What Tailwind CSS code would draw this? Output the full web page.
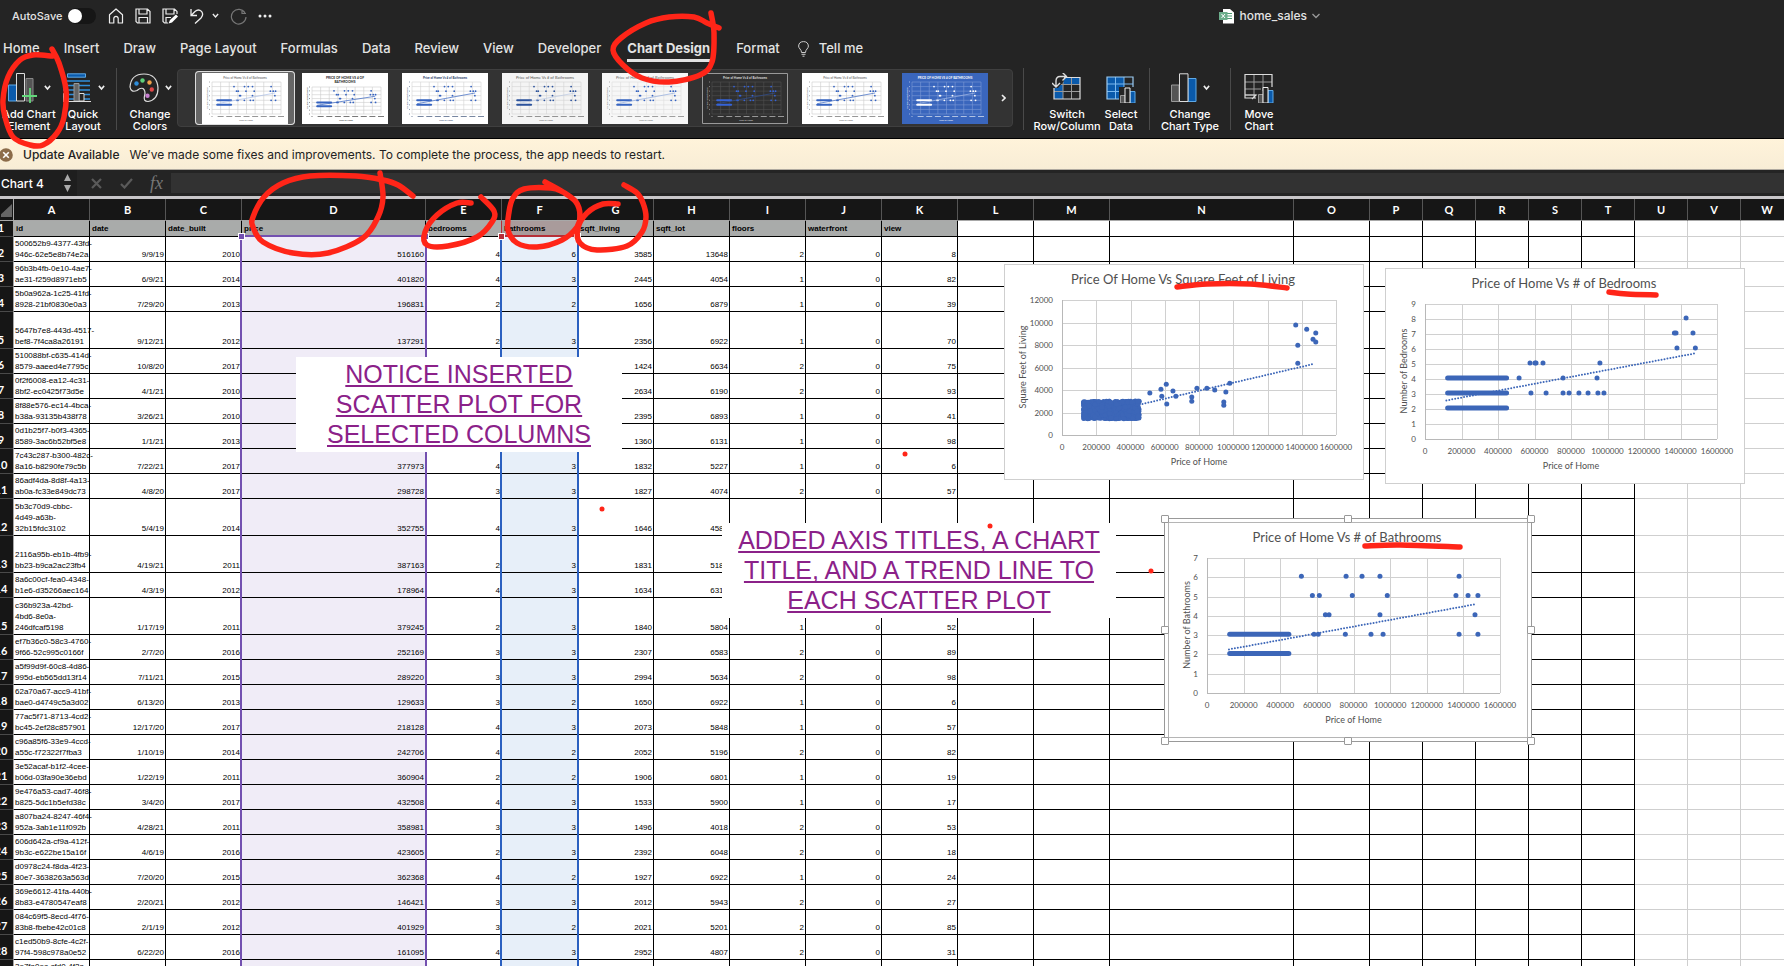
<!DOCTYPE html>
<html lang="en">
<head>
<meta charset="utf-8">
<title>home_sales</title>
<script src="https://cdn.jsdelivr.net/npm/@tailwindcss/browser@4"></script>
</head>
<body class="relative flex h-screen flex-col overflow-hidden bg-[#242424] font-['Inter','Liberation_Sans',sans-serif] text-[#e3e3e3]">

<!-- Title bar -->
<header class="flex h-[30px] shrink-0 items-center pt-0.5 pl-3 text-[11px] font-medium">
  <label class="flex items-center gap-1.5">AutoSave
    <input type="checkbox" role="switch" class="h-4 w-7 appearance-none rounded-full bg-[#161616] before:block before:size-[14px] before:translate-y-px before:rounded-full before:bg-white before:content-['']">
  </label>
  <div class="ml-3 flex items-center gap-[11px]">
    <button aria-label="Home"><svg class="size-4" viewBox="0 0 16 16" fill="none" stroke="#eee" stroke-width="1.2" stroke-linejoin="round"><path d="M1.5 6.8 8 1l6.500 5.800V15H10.200V10.500Q10 8.300 8 8.300T5.800 10.500V15H1.500Z"/></svg></button>
    <button aria-label="Save"><svg class="size-4" viewBox="0 0 16 16" fill="none" stroke="#eee" stroke-width="1.2"><path d="M1 1H12.500L15 3.500V15H2.500L1 13.500ZM4 1V6H12V1M4 15V9.500H12.500V15"/></svg></button>
    <button aria-label="Save as"><svg class="size-4" viewBox="0 0 16 16" fill="none" stroke="#eee" stroke-width="1.2"><path d="M6 15H2.500L1 13.500V1H12.500L15 3.500V6M4 1V6H12V1M4 15V9.500H9"/><path d="M6.500 15.500 8 12 14 6.500 16 8.500 10 14.500Z" fill="#fff" stroke="none"/></svg></button>
    <button aria-label="Undo"><svg class="size-4" viewBox="0 0 16 16" fill="none" stroke="#eee" stroke-width="1.3"><path d="M2 1V7.500H8M2.300 7.300 6 3.500Q9.500 .5 12.500 3.400Q15 6.500 12 10L6 15.500"/></svg></button>
    <button aria-label="Undo list" class="-ml-1"><svg class="w-[7px]" viewBox="0 0 8 6" fill="none" stroke="#eee" stroke-width="1.600"><path d="M1 1.200 4 4.500 7 1.200"/></svg></button>
    <button aria-label="Redo"><svg class="size-[17px]" viewBox="0 0 17 17" fill="none" stroke="#777" stroke-width="1.200"><path d="M12 1.500V5.500H16M15 5A7.300 7.300 0 1 0 16 9"/></svg></button>
    <button aria-label="More"><svg class="h-4 w-[14px]" viewBox="0 0 14 16" fill="#eee"><circle cx="2" cy="8" r="1.500"/><circle cx="7" cy="8" r="1.500"/><circle cx="12" cy="8" r="1.500"/></svg></button>
  </div>
  <button class="mr-[464px] ml-auto flex items-center gap-[5px] text-xs">
    <svg class="h-4 w-[15px]" viewBox="0 0 15 16"><path d="M4 1H11L15 4.500V15.500H4Z" fill="#fff"/><path d="M8 5.500H13M8 8H13M8 10.500H13" stroke="#4b9a72" stroke-width="1.200"/><path d="M0 4H8.500V12H0Z" fill="#6cae8c"/><path d="M2.500 6 6 10M6 6 2.500 10" stroke="#fff"/></svg>
    home_sales
    <svg class="w-2" viewBox="0 0 8 6" fill="none" stroke="#999" stroke-width="1.300"><path d="M.5 1 4 4.500 7.500 1"/></svg>
  </button>
</header>

<!-- Ribbon tabs -->
<nav class="flex h-[38px] shrink-0 items-center gap-6 pl-[3px] text-[13px] font-medium whitespace-nowrap">
  <button>Home</button><button>Insert</button><button>Draw</button><button>Page Layout</button><button>Formulas</button><button>Data</button><button>Review</button><button>View</button><button>Developer</button>
  <button class="relative mx-0.5 font-bold after:absolute after:inset-x-0 after:-bottom-[3px] after:h-[3px] after:bg-[#e3e3e3] after:content-['']">Chart Design</button>
  <button>Format</button>
  <button class="-ml-1.5 flex items-center gap-2.5"><svg class="h-4 w-[11px]" viewBox="0 0 11 16" fill="none" stroke="#ccc"><path d="M3.500 11.500Q3.500 9.500 2 8Q.6 6.500 .6 5Q1 .6 5.500 .6T10.400 5Q10.400 6.500 9 8Q7.500 9.500 7.500 11.500ZM3.500 13.300H7.500M4.500 15.200H6.500"/></svg>Tell me</button>
</nav>

<!-- Ribbon -->
<section aria-label="Chart Design" class="flex h-[70px] shrink-0 items-start text-[11px] leading-3 font-medium text-white [&>button]:flex [&>button]:shrink-0 [&>button]:flex-col [&>button]:items-center [&>button]:gap-[5px] [&>button]:pt-[5px] [&>button>span]:flex [&>button>span]:h-[30px] [&>button>span]:items-center [&>button>span]:gap-[6px] [&>hr]:h-[62px] [&>hr]:w-px [&>hr]:shrink-0 [&>hr]:border-0 [&>hr]:bg-[#4a4a4a]">
  <button class="w-[58px]"><span><svg class="size-[30px]" viewBox="0 0 30 30"><path d="M18 5.500H25V28H18Z" fill="#555" stroke="#888"/><path d="M.5 12H8.500V28H.5Z" fill="#0a5aab" stroke="#5ea9e6"/><path d="M8.500 .5H16.500V28H8.500Z" fill="#242424" stroke="#ddd"/><path d="M22 15V31M14 23H29" stroke="#63d77b" stroke-width="1.800"/></svg><svg class="w-[7px]" viewBox="0 0 8 6" fill="none" stroke="#eee" stroke-width="1.800"><path d="M1 1 4 4.500 7 1"/></svg></span>Add Chart<br>Element</button>
  <button class="w-[50px]"><span><svg class="size-[30px]" viewBox="0 0 30 30"><path d="M1 8H28M1 12.500H28M1 17H28M1 21.500H28M1 26H28" stroke="#2f8edb" stroke-width="1.300"/><path d="M5.500 .8H23.500V4.200H5.500Z" fill="#0a5aab" stroke="#5ea9e6"/><path d="M1.500 20.500H6.500V28H1.500ZM17 20.500H22V28H17Z" fill="#242424" stroke="#ddd"/><path d="M12 10.500H17V28H12Z" fill="#666" stroke="#999"/><path d="M1 28.500H29" stroke="#ddd"/></svg><svg class="w-[7px]" viewBox="0 0 8 6" fill="none" stroke="#eee" stroke-width="1.800"><path d="M1 1 4 4.500 7 1"/></svg></span>Quick<br>Layout</button>
  <hr class="ml-2">
  <button class="ml-1.5 w-[54px]"><span><svg class="size-[30px]" viewBox="0 0 30 30"><path d="M1 14Q2 1 15 1T29 15Q29 27 19 28.500Q14 28.500 15.500 23Q17 18 14 15.500Q11.500 14.500 8 17.500Q2 20 1 14Z" fill="none" stroke="#ddd" stroke-width="1.200"/><circle cx="7.500" cy="10.500" r="2.200" fill="#2f8edb"/><circle cx="13.500" cy="7.500" r="2.200" fill="#5fd07a"/><circle cx="20.500" cy="9.500" r="2.200" fill="#f0a24a"/><circle cx="22.800" cy="16.500" r="2.200" fill="#e04848"/><circle cx="18.500" cy="22.800" r="2.200" fill="#c77fd0"/></svg><svg class="w-[7px]" viewBox="0 0 8 6" fill="none" stroke="#eee" stroke-width="1.800"><path d="M1 1 4 4.500 7 1"/></svg></span>Change<br>Colors</button>
  <div id="gallery" class="mt-px flex h-[58px] shrink-0 items-center rounded border border-[#3f3f3f] bg-[#333] pl-[17px] [&>button]:flex [&>button]:h-[54px] [&>button]:w-[100px] [&>button]:items-center [&>button]:justify-center [&>button]:rounded [&>button[aria-pressed=true]]:bg-[#666] [&>button[aria-pressed=true]]:ring-1 [&>button[aria-pressed=true]]:ring-[#ddd] [&>button[aria-pressed=true]]:ring-inset"></div>
  <hr class="ml-2.5">
  <button class="ml-[9px] w-[68px]"><span><svg class="size-[30px]" viewBox="0 0 30 30"><path d="M2 4.500H28V26H2Z" fill="#242424"/><path d="M11 4.500H28V11.500H11ZM2 11.500H11V26H2Z" fill="#0a5aab"/><path d="M11 4.500V26M19.500 4.500V26M2 11.500H28M2 18.500H28" stroke="#999"/><path d="M2 4.500H28V26H2Z" fill="none" stroke="#ddd" stroke-width="1.200"/><path d="M0 0H12V8L6 15H0Z" fill="#242424"/><path d="M4 14V8Q4 3.500 8 3.500H14M10.500 -.5 14.500 3.500 10.500 7.500M0 10 4 14 8 10" fill="none" stroke="#ddd" stroke-width="1.400"/></svg></span>Switch<br>Row/Column</button>
  <button class="w-10"><span><svg class="size-[30px]" viewBox="0 0 30 30"><path d="M1 4H27V26H1Z" fill="#242424"/><path d="M1 4H18V26H1Z" fill="#0a5aab"/><path d="M9.500 4V26M18 4V26M1 11H27M1 18.500H27" stroke="#7ab8ee"/><path d="M1 4H27V26H1Z" fill="none" stroke="#9ccbf2" stroke-width="1.200"/><path d="M13 14H30V30H13Z" fill="#242424"/><path d="M14.500 22.500H19V30H14.500Z" fill="#555" stroke="#999"/><path d="M24 18.500H29V30H24Z" fill="#0a5aab" stroke="#5ea9e6"/><path d="M19 15H24V30H19Z" fill="#242424" stroke="#eee"/></svg></span>Select<br>Data</button>
  <hr class="ml-2">
  <button class="ml-2.5 w-[60px]"><span><svg class="h-[30px] w-[26px]" viewBox="0 0 26 30"><path d="M.5 12H8V28.500H.5Z" fill="#555" stroke="#999"/><path d="M17 5.500H25V28.500H17Z" fill="#0a5aab" stroke="#5ea9e6"/><path d="M8.500 .8H17V28.500H8.500Z" fill="#242424" stroke="#ddd"/></svg><svg class="w-[7px]" viewBox="0 0 8 6" fill="none" stroke="#eee" stroke-width="1.800"><path d="M1 1 4 4.500 7 1"/></svg></span>Change<br>Chart Type</button>
  <hr class="ml-2.5">
  <button class="ml-[3px] w-[50px]"><span><svg class="size-[30px]" viewBox="0 0 30 30"><path d="M10 2V25M19 2V18M1 9H28M1 16H17M1 22H12" stroke="#999" fill="none"/><path d="M12 25H1V1.500H28V14M1 22H12L8 26" stroke="#ddd" fill="none" stroke-width="1.200"/><path d="M14.500 21.500H19V30H14.500Z" fill="#555" stroke="#999"/><path d="M24 17.500H29V30H24Z" fill="#0a5aab" stroke="#5ea9e6"/><path d="M19 14.500H24V30H19Z" fill="#242424" stroke="#eee"/></svg></span>Move<br>Chart</button>
</section>

<!-- Update message -->
<section role="status" class="flex h-8 shrink-0 items-center gap-2.5 border-t border-b border-t-black border-b-[#b0aaa0] bg-linear-to-b from-[#fff3da] to-[#f8edd6] pt-0.5 text-xs text-[#222]">
  <button aria-label="Dismiss" class="-ml-px"><svg class="size-[14px]" viewBox="0 0 14 14"><circle cx="7" cy="7" r="6.800" fill="#8c6c4a"/><path d="M4.200 4.200 9.800 9.800M9.800 4.200 4.200 9.800" stroke="#fff" stroke-width="1.600"/></svg></button>
  <strong class="font-medium">Update Available</strong>
  <p>We’ve made some fixes and improvements. To complete the process, the app needs to restart.</p>
</section>

<!-- Formula bar -->
<section class="flex h-[26px] shrink-0 items-center">
  <input aria-label="Name box" value="Chart 4" class="h-full w-[60px] bg-[#1e1e1e] pl-px text-[12px] font-medium text-white">
  <button aria-label="Change name box size" class="flex h-full w-[17px] items-center bg-[#1e1e1e] pl-1"><svg class="h-[18px] w-[7px]" viewBox="0 0 7 18" fill="#aaa"><path d="M3.500 0 7 7H0ZM3.500 18 7 11H0Z"/></svg></button>
  <button aria-label="Cancel" class="ml-[14px]"><svg class="size-[11px]" viewBox="0 0 11 11" stroke="#5a5a5a" stroke-width="2.200"><path d="M1 1 10 10M10 1 1 10"/></svg></button>
  <button aria-label="Enter" class="ml-[18px]"><svg class="h-[11px] w-[13px]" viewBox="0 0 13 11" fill="none" stroke="#5a5a5a" stroke-width="2.200"><path d="M1 6 4.500 9.500 12 1"/></svg></button>
  <button aria-label="Insert function" class="ml-4 w-[15px] font-['Liberation_Serif',serif] text-[18px] leading-none text-[#777] italic">fx</button>
  <input aria-label="Formula" class="ml-[7px] h-5 flex-1 bg-[#323232]">
</section>

<!-- Worksheet -->
<main class="relative min-h-0 flex-1 overflow-hidden border-t-[3px] border-[#c8c6c9] bg-white text-black">
  <table class="-ml-[11px] w-[1805px] table-fixed border-separate border-spacing-0 font-['Liberation_Sans',Arial,sans-serif] text-[8px] leading-[11px]
    [&_td]:border-r [&_td]:border-b [&_td]:border-black [&_td]:px-px [&_td]:pb-px [&_td]:text-right [&_td]:align-bottom [&_td]:whitespace-nowrap
    [&_td:nth-child(n+22)]:border-[#cfcfcf]
    [&_td:nth-child(2)]:text-left
    [&_tbody_td:nth-child(5)]:bg-[#f0ecf7] [&_tbody_td:nth-child(7)]:bg-[#e7eff9]
    [&_th[scope=row]]:border-r [&_th[scope=row]]:border-b [&_th[scope=row]]:border-r-[#a8a8a8] [&_th[scope=row]]:border-b-[#4a4a4a] [&_th[scope=row]]:bg-[#161616] [&_th[scope=row]]:p-0 [&_th[scope=row]]:pb-0.5 [&_th[scope=row]]:align-bottom [&_th[scope=row]]:font-['Lato',sans-serif] [&_th[scope=row]]:text-[11px] [&_th[scope=row]]:leading-3 [&_th[scope=row]]:text-white">
    <colgroup id="cols"></colgroup>
    <thead id="head"></thead>
    <tbody id="rows"></tbody>
  </table>

  <!-- Chart source ranges -->
  <div class="absolute top-9 -bottom-1 left-[240px] w-[187px] border-2 border-[#7350b0]"></div>
  <div class="absolute top-[38px] -bottom-1 left-[500px] w-[79px] border-x-2 border-[#2b60c0]"></div>
  <div class="absolute top-[22px] left-[501px] h-4 w-[77px] border-b-2 border-l border-[#b52f38]"></div>
  <i class="absolute top-[34px] left-[238px] size-[7px] border border-white bg-[#7350b0]"></i>
  <i class="absolute top-[34px] left-[422px] size-[7px] border border-white bg-[#7350b0]"></i>
  <i class="absolute top-[34px] left-[498px] size-[7px] border border-white bg-[#b52f38]"></i>
  <i class="absolute top-[34px] left-[574px] size-[7px] border border-white bg-[#b52f38]"></i>

  <!-- Charts -->
  <figure id="chart-sqft" class="absolute top-[65px] left-[1004px] border border-[#cfcfcf] bg-white"></figure>
  <figure id="chart-bed" class="absolute top-[69px] left-[1385px] border border-[#cfcfcf] bg-white"></figure>
  <div class="absolute top-[319px] left-[1164px] border border-[#999] bg-white p-[3px]">
    <figure id="chart-bath" class="border border-[#b5b5b5]"></figure>
    <div class="absolute -inset-1 grid grid-cols-3 content-between [&>i]:size-2 [&>i]:rounded-[1px] [&>i]:border [&>i]:border-[#999] [&>i]:bg-white [&>i:nth-child(3n)]:justify-self-end [&>i:nth-child(3n+2)]:justify-self-center">
      <i></i><i></i><i></i><i></i><b></b><i></i><i></i><i></i><i></i>
    </div>
  </div>

  <!-- Notes -->
  <p class="absolute top-[158px] left-[296px] flex h-[95px] w-[326px] items-center justify-center bg-white pb-0.5 text-center font-['Liberation_Sans',Arial,sans-serif] text-[25px] leading-[30px] text-[#8b2189]"><u class="decoration-2 underline-offset-2 [text-decoration-skip-ink:none]">NOTICE INSERTED<br>SCATTER PLOT FOR<br>SELECTED COLUMNS</u></p>
  <p class="absolute top-[324px] left-[722px] flex h-[95px] w-[394px] items-center justify-center bg-white pb-0.5 text-center font-['Liberation_Sans',Arial,sans-serif] text-[25px] leading-[30px] text-[#8b2189]"><u class="decoration-2 underline-offset-2 [text-decoration-skip-ink:none]">ADDED AXIS TITLES, A CHART<br>TITLE, AND A TREND LINE TO<br>EACH SCATTER PLOT</u></p>
</main>

<!-- Pen marks -->
<svg id="ink" class="pointer-events-none absolute top-0 left-0 h-[966px] w-[1784px]" viewBox="0 0 1784 966" fill="none" stroke="#ff2518" stroke-width="5.500" stroke-linecap="round" stroke-linejoin="round"></svg>

<script>
// Columns and rows
const widths = [25,76,76,76,184,76,76,76,76,76,76,76,76,76,184,76,53,53,53,53,53,53,53,53];
document.getElementById('cols').innerHTML = widths.map(w => `<col style="width:${w}px">`).join('');
const heads = ['id','date','date_built','price','bedrooms','bathrooms','sqft_living','sqft_lot','floors','waterfront','view'];
document.getElementById('head').innerHTML =
  `<tr class="h-[22px] bg-[#161616] font-['Lato',sans-serif] text-[11px] text-white"><th class="border-r border-b border-[#a8a8a8] p-0"><svg class="ml-auto h-[17px] w-3" viewBox="0 0 12 17"><path d="M11 3V16H-3Z" fill="#666"/></svg></th>`
  + [...'ABCDEFGHIJKLMNOPQRSTUVW'].map(c => `<th scope="col" class="border-r border-b border-r-[#555] border-b-[#a8a8a8] p-0">${c}</th>`).join('') + '</tr>'
  + `<tr class="h-4"><th scope="row">1</th>`
  + heads.map(h => `<th class="border-r border-b border-black p-0 pl-0.5 text-left ${h === 'bathrooms' ? 'bg-[#a99b9b]' : 'bg-[#a9abaa]'}">${h}</th>`).join('')
  + '<td></td>'.repeat(12) + '</tr>';
const data = `500652b9-4377-43fd-|946c-62e5e8b74e2a,9/9/19,2010,516160,4,6,3585,13648,2,0,8
96b3b4fb-0e10-4ae7-|ae31-f259d8971eb5,6/9/21,2014,401820,4,3,2445,4054,1,0,82
5b0a962a-1c25-41fd-|8928-21bf0830e0a3,7/29/20,2013,196831,2,2,1656,6879,1,0,39
5647b7e8-443d-4517-|bef8-7f4ca8a26191,9/12/21,2012,137291,2,3,2356,6922,1,0,70
510088bf-c635-414d-|8579-aaeed4e7795c,10/8/20,2017,,,,1424,6634,2,0,75
0f2f6008-ea12-4c31-|8bf2-ec0425f73d5e,4/1/21,2010,,,,2634,6190,2,0,93
8f88e576-ec14-4bca-|b38a-93135b438f78,3/26/21,2010,,,,2395,6893,1,0,41
0d1b25f7-b0f3-4365-|8589-3ac6b52bf5e8,1/1/21,2013,,,,1360,6131,1,0,98
7c43c287-b300-482c-|8a16-b8290fe79c5b,7/22/21,2017,377973,4,3,1832,5227,1,0,6
86adf4da-8d8f-4a13-|ab0a-fc33e849dc73,4/8/20,2017,298728,3,3,1827,4074,2,0,57
5b3c70d9-cbbc-|4d49-a63b-|32b15fdc3102,5/4/19,2014,352755,4,3,1646,4580,,,
2116a95b-eb1b-4fb9-|bb23-b9ca2ac23fb4,4/19/21,2011,387163,2,3,1831,5180,,,
8a6c00cf-fea0-4348-|b1e6-d35266aec164,4/3/19,2012,178964,4,3,1634,6317,,,
c36b923a-42bd-|4bd6-8e0a-|246dfcaf5198,1/17/19,2011,379245,2,3,1840,5804,1,0,52
ef7b36c0-58c3-4760-|9f66-52c995c0166f,2/7/20,2016,252169,3,3,2307,6583,2,0,89
a5f99d9f-60c8-4d86-|995d-eb565dd13f14,7/11/21,2015,289220,3,3,2994,5634,2,0,98
62a70a67-acc9-41bf-|bae0-d4749c5a3d02,6/13/20,2013,129633,3,2,1650,6922,1,0,6
77ac5f71-8713-4cd2-|bc45-2ef28c857901,12/17/20,2017,218128,4,3,2073,5848,1,0,57
c96a85f6-33e9-4ccd-|a55c-f72322f7fba3,1/10/19,2014,242706,4,2,2052,5196,2,0,82
3e52acaf-b1f2-4cee-|b06d-03fa90e36ebd,1/22/19,2011,360904,2,2,1906,6801,1,0,19
9e476a53-cad7-46f8-|b825-5dc1b5efd38c,3/4/20,2017,432508,4,3,1533,5900,1,0,17
a807ba24-8247-46f4-|952a-3ab1e11f092b,4/28/21,2011,358981,3,3,1496,4018,2,0,53
606d642a-cf9a-412f-|9b3c-e622be15a16f,4/6/19,2016,423605,2,3,2392,6048,2,0,18
d0978c24-f8da-4f23-|80e7-3638263a563d,7/20/20,2015,362368,4,2,1927,6922,1,0,24
369e6612-41fa-440b-|8b83-e4780547eaf8,2/20/21,2012,146421,3,3,2012,5943,2,0,27
084c69f5-8ecd-4f76-|83b8-fbebe42c01c8,2/1/19,2012,401929,3,2,2021,5201,2,0,85
c1ed50b9-8cfe-4c2f-|97f4-598c978a0e52,6/22/20,2016,161095,4,3,2952,4807,2,0,31
3e7fa0ec-cfd0-4f2a-|8d1c-,,,,,,,,,,`.split('\n');
const tall = [5, 12, 13, 15];
document.getElementById('rows').innerHTML = data.map((line, i) => {
  const n = i + 2;
  return `<tr class="${tall.includes(n) ? 'h-[37px]' : 'h-[25px]'}"><th scope="row"><span class="flex justify-center">${n}</span></th>`
    + line.split(',').map(v => `<td>${v.replaceAll('|', '<br>')}</td>`).join('') + '<td></td>'.repeat(12) + '</tr>';
}).join('');

// Scatter charts; prices are in thousands
const bath = [[6,[510,754,841,939,1371]],[5,[570,608,788,979,1354,1420,1474]],[4,[641,661,939,1458]],[3,[579,602,750,890,956,1371,1474]]];
const bed = [[8,[1425]],[7,[1361,1370,1463]],[6,[1375,1476]],[5,[570,597,603,641,953]],[4,[510,751,937]],[3,[575,658,751,784,838,888,942,975]]];
const flat = g => g.flatMap(([y, xs]) => xs.map(x => [x, y]));
const sqft = [[507,3733],[572,4059],[603,4504],[577,3437],[606,2756],[642,3911],[659,3437],[752,3378],[752,2993],[782,4148],[840,4148],[886,4000],[974,4593],[951,3822],[939,2933],[939,2637],[1371,6370],[1371,7970],[1359,9778],[1423,9393],[1476,9067],[1460,8504],[1476,8267]];
let seed = 7;
const rnd = () => (seed = (seed * 16807) % 2147483647) / 2147483647;
for (let i = 0; i < 700; i++) sqft.push([120 + rnd() * 325, 1450 + rnd() * 1570]);

function chart(id, o) {
  const R = 332, T = 36, B = 171, L = o.left;
  const X = v => L + v / 1600 * (R - L), Y = v => B - v / o.max * (B - T);
  let s = '';
  for (let v = 0; v <= o.max; v += o.step) {
    s += `<path d="M${L} ${Math.round(Y(v)) + .5}H${R}" stroke="${v ? '#d0d0d0' : '#b8b8b8'}"/><text x="${L - 9}" y="${Y(v) + 3}" text-anchor="end" font-size="8">${v}</text>`;
  }
  for (let v = 0; v <= 1600; v += 200) {
    s += `<path d="M${Math.round(X(v)) + .5} ${T}V${B}" stroke="${v ? '#d0d0d0' : '#b8b8b8'}"/><text x="${X(v)}" y="186" text-anchor="middle" font-size="8">${v ? v * 1000 : 0}</text>`;
  }
  s += `<g fill="#3c66b8">` + o.pts.map(([x, y]) => `<circle cx="${X(x) + 1}" cy="${Y(y) - o.lift}" r="2.500"/>`).join('') + '</g>';
  s += o.bars.map(y => `<path d="M${X(124)} ${Y(y) - o.lift}H${X(447)}" stroke="#3c66b8" stroke-width="5" stroke-linecap="round"/>`).join('');
  const [a, b, c, d] = o.trend;
  s += `<path d="M${X(a)} ${Y(b)}L${X(c)} ${Y(d)}" stroke="#3c66b8" stroke-width="2" stroke-linecap="round" stroke-dasharray="0 3"/>`;
  s += `<text x="179" y="20" text-anchor="middle" font-size="13">${o.title}</text>`;
  s += `<text x="${(L + R) / 2}" y="201" text-anchor="middle" font-size="9">Price of Home</text>`;
  s += `<text transform="translate(22 103) rotate(-90)" text-anchor="middle" font-size="9">${o.axis}</text>`;
  document.getElementById(id).innerHTML = `<svg class="block h-[214px] w-[358px] font-['Lato',sans-serif]" viewBox="1 1 358 214" fill="#505050">${s}</svg>`;
}
chart('chart-sqft', {left: 58, max: 12000, step: 2000, lift: 0, pts: sqft, bars: [], trend: [453,2700,1476,6340], title: 'Price Of Home Vs Square Feet of Living', axis: 'Square Feet of Living'});
chart('chart-bed', {left: 40, max: 9, step: 1, lift: 1, pts: flat(bed), bars: [4,3,2], trend: [117,2.57,1480,5.71], title: 'Price of Home Vs # of Bedrooms', axis: 'Number of Bedrooms'});
chart('chart-bath', {left: 39, max: 7, step: 1, lift: 1, pts: flat(bath), bars: [3,2], trend: [120,2.26,1465,4.6], title: 'Price of Home Vs # of Bathrooms', axis: 'Number of Bathrooms'});

// Chart style gallery
const styles = [
  {bg:'#fff', grid:'#ccc', ink:'#555', dot:'#3563c0', trend:'#a9bde6'},
  {bg:'#fff', grid:'#ccc', ink:'#222', dot:'#3563c0', trend:'#3563c0', two:true},
  {bg:'#fff', grid:'#d4d4d4', ink:'#1f3864', dot:'#3563c0', trend:'#3563c0', bold:true},
  {bg:'#f4f4f4', grid:'#d4d4d4', ink:'#555', dot:'#2b529c', trend:'#b9c7e2', big:true},
  {bg:'#f7f7f7', grid:'#ddd', ink:'#666', dot:'#3563c0', trend:'#8ea9dc', big:true},
  {bg:'#303030', grid:'#505050', ink:'#ddd', dot:'#3563d8', trend:'#2f4f95', edge:'#999', bold:true},
  {bg:'#fff', grid:'#ccc', ink:'#555', dot:'#3563c0', trend:'#3563c0'},
  {bg:'#3a66bd', grid:'#7e9bd6', ink:'#fff', dot:'#fff', trend:'#a9bde6', caps:true, bold:true},
];
document.getElementById('gallery').innerHTML = styles.map((t, i) => {
  const top = t.two ? 14 : 9, X = v => 10 + v / 1600 * 69, Y = v => 41 - v / 7 * (41 - top);
  const name = 'Price of Home Vs # of Bathrooms';
  let s = '';
  for (let v = 0; v <= 7; v++) s += `<path d="M10 ${Y(v)}H79" stroke="${t.grid}" stroke-width=".6"/><path d="M7 ${Y(v)}H8" stroke="${t.ink}" stroke-width="1" opacity=".5"/>`;
  for (let v = 0; v <= 1600; v += 200) s += `<path d="M${X(v)} ${top}V41" stroke="${t.grid}" stroke-width=".6"/><path d="M${X(v) - (v ? 3 : .5)} 43.500H${X(v) + (v ? 3 : .5)}" stroke="${t.ink}" stroke-width="1" opacity=".6"/>`;
  s += flat(bath).map(([x, y]) => `<circle cx="${X(x)}" cy="${Y(y)}" r=".9" fill="${t.dot}"/>`).join('');
  s += [2, 3].map(y => `<path d="M${X(120)} ${Y(y)}H${X(443)}" stroke="${t.dot}" stroke-width="2" stroke-linecap="round"/>`).join('');
  s += `<path d="M${X(120)} ${Y(2.26)}L${X(1465)} ${Y(4.6)}" stroke="${t.trend}" stroke-width=".7"/>`;
  const f = `fill="${t.ink}" text-anchor="middle" font-weight="${t.bold || t.two ? 700 : 400}"`;
  s += t.two ? `<text x="43" y="5.500" font-size="3.300" ${f}>PRICE OF HOME VS # OF</text><text x="43" y="10" font-size="3.300" ${f}>BATHROOMS</text>`
             : `<text x="43" y="5.500" font-size="${t.big ? 4 : 3}" ${f}>${t.caps ? name.toUpperCase() : name}</text>`;
  s += `<text x="44" y="48" font-size="2.200" fill="${t.ink}" text-anchor="middle">Price of Home</text><text transform="translate(5.500 25) rotate(-90)" font-size="2.200" fill="${t.ink}" text-anchor="middle">Number of Bathrooms</text>`;
  if (t.edge) s += `<path d="M.5 .5H85.500V50.500H.5Z" fill="none" stroke="${t.edge}"/>`;
  return `<button aria-label="Style ${i + 1}" aria-pressed="${i === 0}"><svg class="h-[51px] w-[86px] font-['Lato',sans-serif]" viewBox="0 0 86 51"><path d="M0 0H86V51H0Z" fill="${t.bg}"/>${s}</svg></button>`;
}).join('') + `<div class="flex w-[17px] justify-center"><svg class="w-[5px]" viewBox="0 0 5 8" fill="none" stroke="#eee" stroke-width="1.600"><path d="M1 1 4 4 1 7"/></svg></div>`;

// Smooth pen strokes through their points
const strokes = [
  [[711,13],[714,33],[712,62],[700,75],[669,82],[642,78],[623,65],[613,50],[621,38],[646,23],[669,17],[694,17],[707,23],[719,28]],
  [[52,49],[59,63],[66,90],[64,117],[57,133],[43,145],[30,145],[13,137],[5,117],[3,100],[8,77],[20,60],[33,55],[52,56]],
  [[413,196],[398,185],[383,180],[356,176],[310,176],[283,183],[264,197],[253,217],[253,227],[263,242],[293,253],[328,253],[363,238],[378,217],[383,197],[380,173]],
  [[471,203],[457,203],[437,215],[425,232],[427,245],[448,246],[477,237],[492,222],[494,211],[481,197]],
  [[545,182],[563,192],[576,202],[580,215],[577,227],[562,240],[537,247],[517,243],[508,230],[509,212],[513,198],[524,189],[551,188],[563,192]],
  [[618,204],[603,204],[587,213],[578,228],[580,243],[597,250],[627,246],[642,232],[646,217],[643,203],[637,193],[624,185]],
  [[1177,287],[1207,284],[1250,284],[1287,288]],
  [[1609,292],[1627,294],[1656,295]],
  [[1365,546],[1400,545],[1460,547]],
];
const smooth = p => p.reduce((d, [x, y], i) => {
  if (!i) return `M${x} ${y}`;
  const a = p[i - 2] || p[i - 1], b = p[i - 1], e = p[i + 1] || p[i];
  return d + `C${b[0] + (x - a[0]) / 6} ${b[1] + (y - a[1]) / 6} ${x - (e[0] - b[0]) / 6} ${y - (e[1] - b[1]) / 6} ${x} ${y}`;
}, '');
document.getElementById('ink').innerHTML = strokes.map(p => `<path d="${smooth(p)}"/>`).join('')
  + [[905,454],[602,509],[990,526],[1151,571]].map(([x, y]) => `<circle cx="${x}" cy="${y}" r="2.500" fill="#ff2518" stroke="none"/>`).join('');
</script>
</body>
</html>
